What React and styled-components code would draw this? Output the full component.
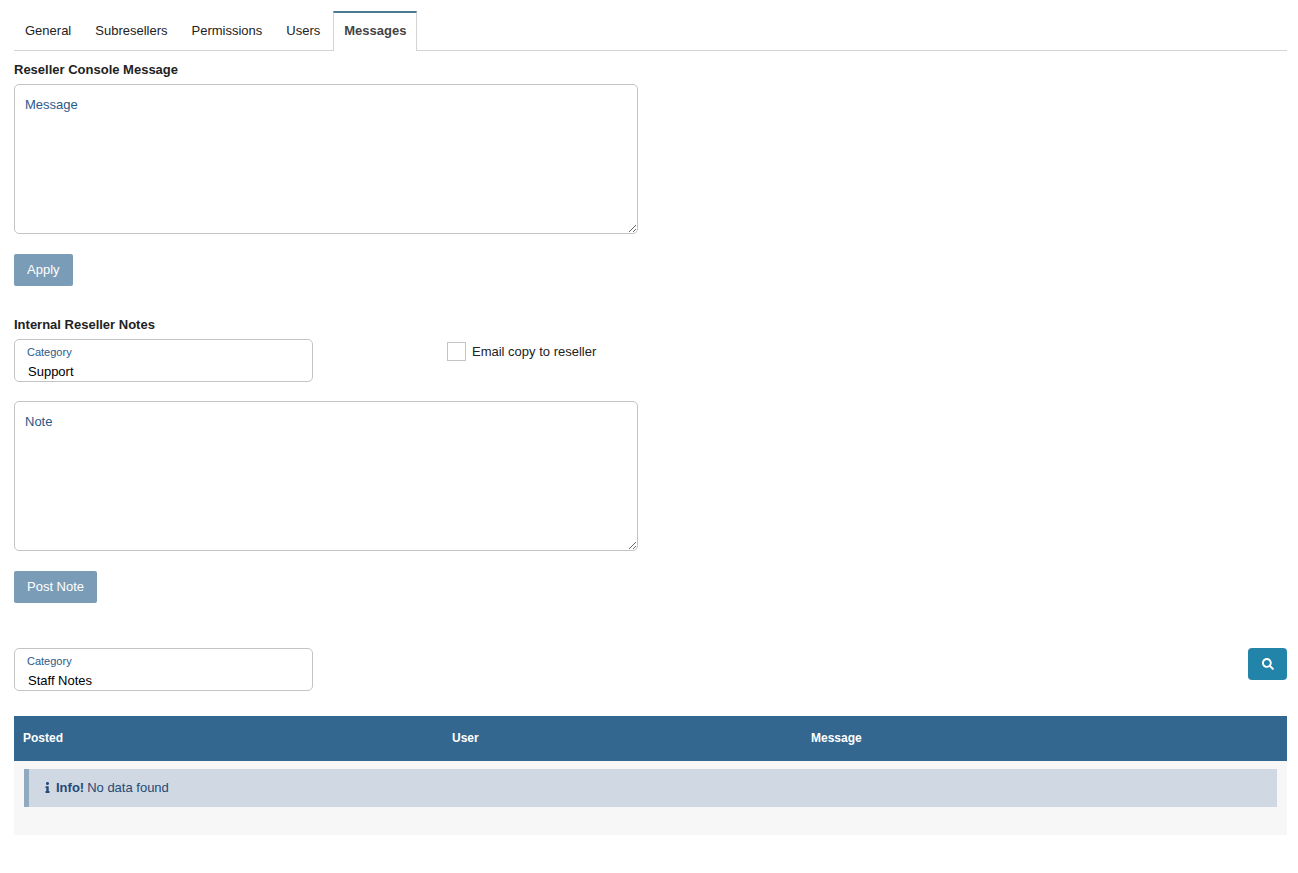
import React from 'react';
import styled, { createGlobalStyle } from 'styled-components';
import { FaInfo, FaSearch } from 'react-icons/fa';

const GlobalStyle = createGlobalStyle`
  body {
    margin: 0;
    background: #fff;
    font-family: 'Liberation Sans', Arial, sans-serif;
    font-size: 13px;
    color: #222;
  }
`;

const Page = styled.div`
  padding: 11px 11px 0 14px;
`;

const Tabs = styled.div`
  display: flex;
  height: 40px;
  box-sizing: border-box;
  border-bottom: 1px solid #d4d4d4;
`;

const Tab = styled.div`
  display: flex;
  align-items: center;
  height: ${(p) => (p.$active ? '40px' : '39px')};
  box-sizing: border-box;
  padding: ${(p) => (p.$active ? '0 10px 3px' : '0 11px')};
  margin-right: ${(p) => (p.$active ? '0' : '2px')};
  color: ${(p) => (p.$active ? '#444' : '#222')};
  font-weight: ${(p) => (p.$active ? 'bold' : 'normal')};
  background: #fff;
  ${(p) =>
    p.$active &&
    `
    border: 1px solid #d4d4d4;
    border-top: 2px solid #4a7b93;
    border-bottom: 0;
  `}
`;

const SectionTitle = styled.h3`
  margin: ${(p) => p.$top || 0}px 0 7px;
  font-size: 13px;
  line-height: 15px;
  font-weight: bold;
  color: #222;
`;

const TextArea = styled.textarea`
  display: block;
  width: 624px;
  height: 150px;
  box-sizing: border-box;
  padding: 12px 10px;
  border: 1px solid #c4c4c4;
  border-radius: 5px;
  font-family: inherit;
  font-size: 13px;
  line-height: 16px;
  outline: none;
  &::placeholder {
    color: #2a5a8a;
    opacity: 1;
  }
`;

const Button = styled.button`
  display: block;
  height: 32px;
  margin-top: 20px;
  padding: 0 13px 1px;
  border: 0;
  border-radius: 2px;
  background: #7b9cb6;
  color: #fff;
  font-family: inherit;
  font-size: 13px;
`;

const NoteRow = styled.div`
  display: flex;
  align-items: flex-start;
  margin-bottom: 19px;
`;

const SelectBox = styled.div`
  width: 299px;
  height: 43px;
  box-sizing: border-box;
  padding: 6px 12px 0;
  border: 1px solid #c4c4c4;
  border-radius: 5px;
`;

const SelectLabel = styled.div`
  font-size: 11px;
  line-height: 12px;
  color: #2a5a8a;
`;

const SelectValue = styled.div`
  margin-top: 6px;
  padding-left: 1px;
  font-size: 13px;
  line-height: 16px;
  color: #000;
`;

const CheckLabel = styled.label`
  display: flex;
  align-items: center;
  margin: 3px 0 0 134px;
  line-height: 19px;
  color: #222;
`;

const CheckBox = styled.span`
  width: 19px;
  height: 19px;
  box-sizing: border-box;
  margin-right: 6px;
  border: 1px solid #c4c4c4;
`;

const FilterRow = styled.div`
  display: flex;
  justify-content: space-between;
  align-items: flex-start;
  margin-top: 45px;
`;

const SearchButton = styled.button`
  display: flex;
  align-items: center;
  justify-content: center;
  width: 39px;
  height: 32px;
  padding: 0;
  border: 0;
  border-radius: 4px;
  background: #2184a8;
  color: #fff;
  font-size: 12px;
`;

const Table = styled.div`
  margin-top: 25px;
  background: #f7f7f7;
  height: 119px;
`;

const HeadRow = styled.div`
  display: grid;
  grid-template-columns: 429px 359px 1fr;
  align-items: center;
  height: 45px;
  box-sizing: border-box;
  padding-bottom: 2px;
  background: #33678f;
  color: #fff;
  font-size: 12px;
  font-weight: bold;
`;

const HeadCell = styled.div`
  padding-left: 9px;
`;

const Alert = styled.div`
  display: flex;
  align-items: center;
  height: 38px;
  box-sizing: border-box;
  margin: 8px 10px 0;
  padding: 0 0 2px 13px;
  border-left: 5px solid #90aabf;
  background: #d0d8e3;
  color: #254a75;
`;

const AlertIcon = styled.span`
  display: inline-flex;
  margin-right: 3px;
  font-size: 11px;
`;

const AlertStrong = styled.strong`
  margin-right: 3px;
`;

export default function App() {
  return (
    <Page>
      <GlobalStyle />
      <Tabs>
        <Tab>General</Tab>
        <Tab>Subresellers</Tab>
        <Tab>Permissions</Tab>
        <Tab>Users</Tab>
        <Tab $active>Messages</Tab>
      </Tabs>

      <SectionTitle $top={11}>Reseller Console Message</SectionTitle>
      <TextArea placeholder="Message" />
      <Button>Apply</Button>

      <SectionTitle $top={31}>Internal Reseller Notes</SectionTitle>
      <NoteRow>
        <SelectBox>
          <SelectLabel>Category</SelectLabel>
          <SelectValue>Support</SelectValue>
        </SelectBox>
        <CheckLabel>
          <CheckBox />
          Email copy to reseller
        </CheckLabel>
      </NoteRow>
      <TextArea placeholder="Note" />
      <Button>Post Note</Button>

      <FilterRow>
        <SelectBox>
          <SelectLabel>Category</SelectLabel>
          <SelectValue>Staff Notes</SelectValue>
        </SelectBox>
        <SearchButton aria-label="Search">
          <FaSearch />
        </SearchButton>
      </FilterRow>

      <Table>
        <HeadRow>
          <HeadCell>Posted</HeadCell>
          <HeadCell>User</HeadCell>
          <HeadCell>Message</HeadCell>
        </HeadRow>
        <Alert>
          <AlertIcon>
            <FaInfo />
          </AlertIcon>
          <AlertStrong>Info!</AlertStrong>
          No data found
        </Alert>
      </Table>
    </Page>
  );
}
